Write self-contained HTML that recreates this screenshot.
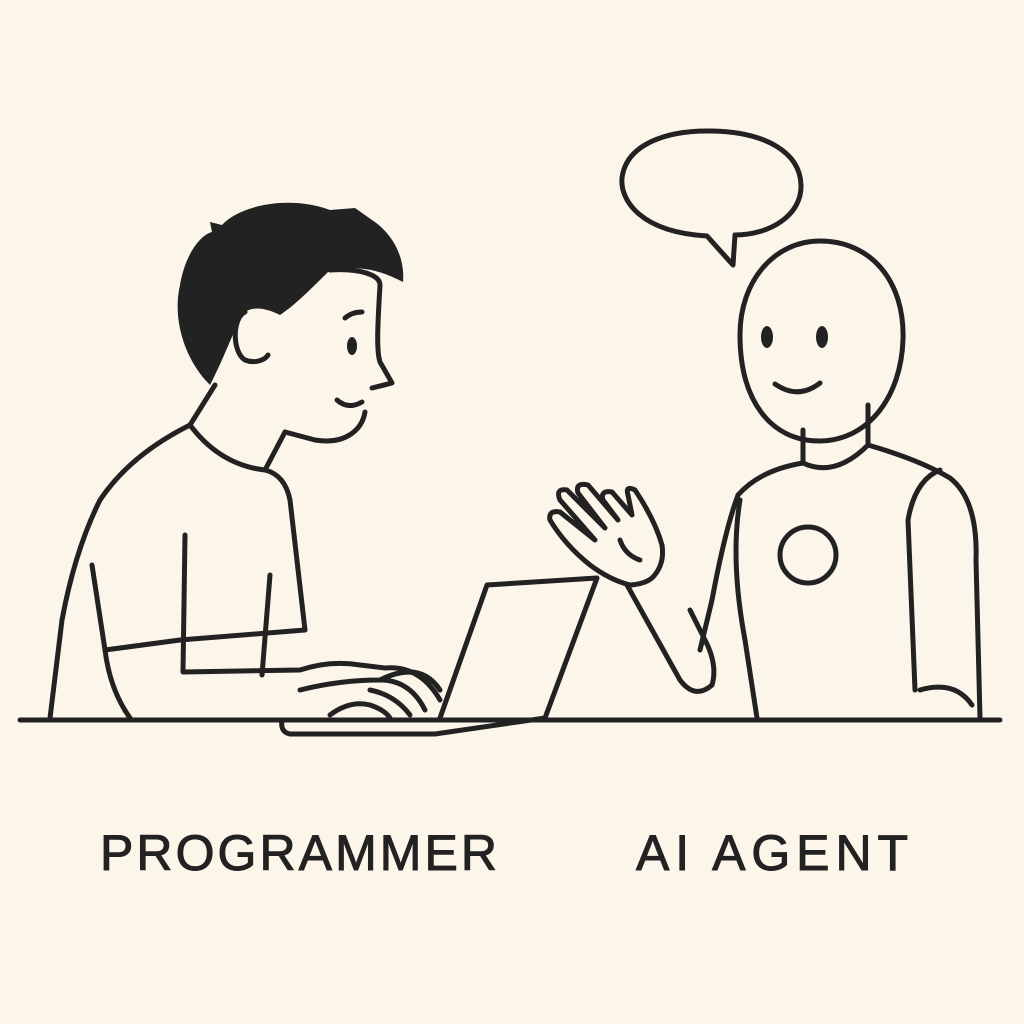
<!DOCTYPE html>
<html><head><meta charset="utf-8"><style>
html,body{margin:0;padding:0;background:#fcf6ea;}
svg{display:block}
</style></head><body>
<svg width="1024" height="1024" viewBox="0 0 1024 1024" xmlns="http://www.w3.org/2000/svg">
<rect width="1024" height="1024" fill="#fcf6ea"/>
<g fill="none" stroke="#222" stroke-width="5" stroke-linecap="round" stroke-linejoin="round">
<line x1="20" y1="720" x2="1000" y2="720"/>
<path d="M707 236 C640 232 620 200 622 178 C626 145 665 130 712 131 C765 132 800 152 801 185 C802 215 770 235 735 235 L733 265 L707 236 Z"/>
<path d="M820 241 C870 241 905 280 903 340 C901 395 870 440 820 441 C770 441 740 400 740 335 C740 280 775 241 820 241 Z"/>
<ellipse cx="767" cy="337" rx="6" ry="11" fill="#222" stroke="none"/>
<ellipse cx="822" cy="337" rx="6" ry="11" fill="#222" stroke="none"/>
<path d="M775 384 Q798 400 820 383"/>
<path d="M803 430 L803 463"/>
<path d="M868 405 L868 445"/>
<path d="M803 463 Q835 478 868 445"/>
<path d="M803 463 Q760 470 738 495 Q725 530 712 600"/>
<path d="M868 445 Q920 460 950 478 Q978 500 976 560 L980 718"/>
<path d="M740 500 Q730 560 745 640 L757 718"/>
<path d="M940 470 Q915 480 908 520 L915 690"/>
<path d="M920 690 Q955 680 972 705"/>
<circle cx="808" cy="555" r="28"/>
<path d="M627 585 L680 680 Q695 700 712 685 Q718 665 705 640 L690 610"/>
<path d="M712 600 L700 650"/>
<path d="M630 585 Q610 580 590 565 Q565 545 550 520 Q548 510 560 512 L595 540 M595 540 L560 500 Q555 488 567 490 L605 528 M605 528 L578 493 Q575 482 588 485 L618 520 M618 520 L603 500 Q600 490 612 492 L632 515 L628 495 Q625 485 635 490 Q655 520 662 545 Q665 565 652 578 Q645 584 630 585"/>
<path d="M620 540 Q625 555 640 560"/>
<path d="M210 385 C185 360 172 320 180 285 C185 255 200 235 212 232 L210 222 L222 225 C240 205 290 195 330 210 L355 208 L372 220 C395 235 405 260 403 282 C380 270 360 265 330 270 C310 290 295 305 280 315 C270 310 255 305 245 312 C235 325 228 350 210 385 Z" fill="#222" stroke="none"/>
<path d="M330 270 C360 268 380 275 380 285 C378 320 376 350 380 362 L392 383 L372 388"/>
<path d="M365 412 C362 430 345 445 315 440 L285 432"/>
<path d="M245 312 C232 318 232 352 245 360 C255 364 265 360 268 355"/>
<ellipse cx="352" cy="346" rx="5" ry="9" fill="#222" stroke="none"/>
<path d="M345 318 Q352 312 362 312"/>
<path d="M337 400 Q348 410 362 402"/>
<path d="M215 385 L190 425"/>
<path d="M285 432 L265 470"/>
<path d="M190 425 Q220 465 265 470 Q285 475 290 500 L305 630"/>
<path d="M190 425 Q130 455 100 500 Q75 550 62 620 L50 718"/>
<path d="M92 565 L105 650 L180 640 L305 630"/>
<path d="M185 535 L183 672 L300 670 Q330 660 360 665 L385 668"/>
<path d="M105 650 Q110 690 130 718"/>
<path d="M270 575 L262 675"/>
<path d="M300 690 Q340 680 380 680 Q420 660 440 690"/>
<path d="M385 668 Q420 665 440 700"/>
<path d="M380 680 Q410 680 425 710"/>
<path d="M370 690 Q395 695 410 715"/>
<path d="M330 715 Q350 700 370 705 Q385 710 390 718"/>
<path d="M440 718 L487 585 L597 578 L545 718"/>
<path d="M282 720 Q280 732 290 734 L435 734 L545 718"/>
</g>
<g font-family="Liberation Sans, sans-serif" font-size="50" fill="#222" stroke="#222" stroke-width="1">
<text x="100" y="870" textLength="397" lengthAdjust="spacing">PROGRAMMER</text>
<text x="636" y="870" textLength="272" lengthAdjust="spacing">AI AGENT</text>
</g>
</svg>
</body></html>
